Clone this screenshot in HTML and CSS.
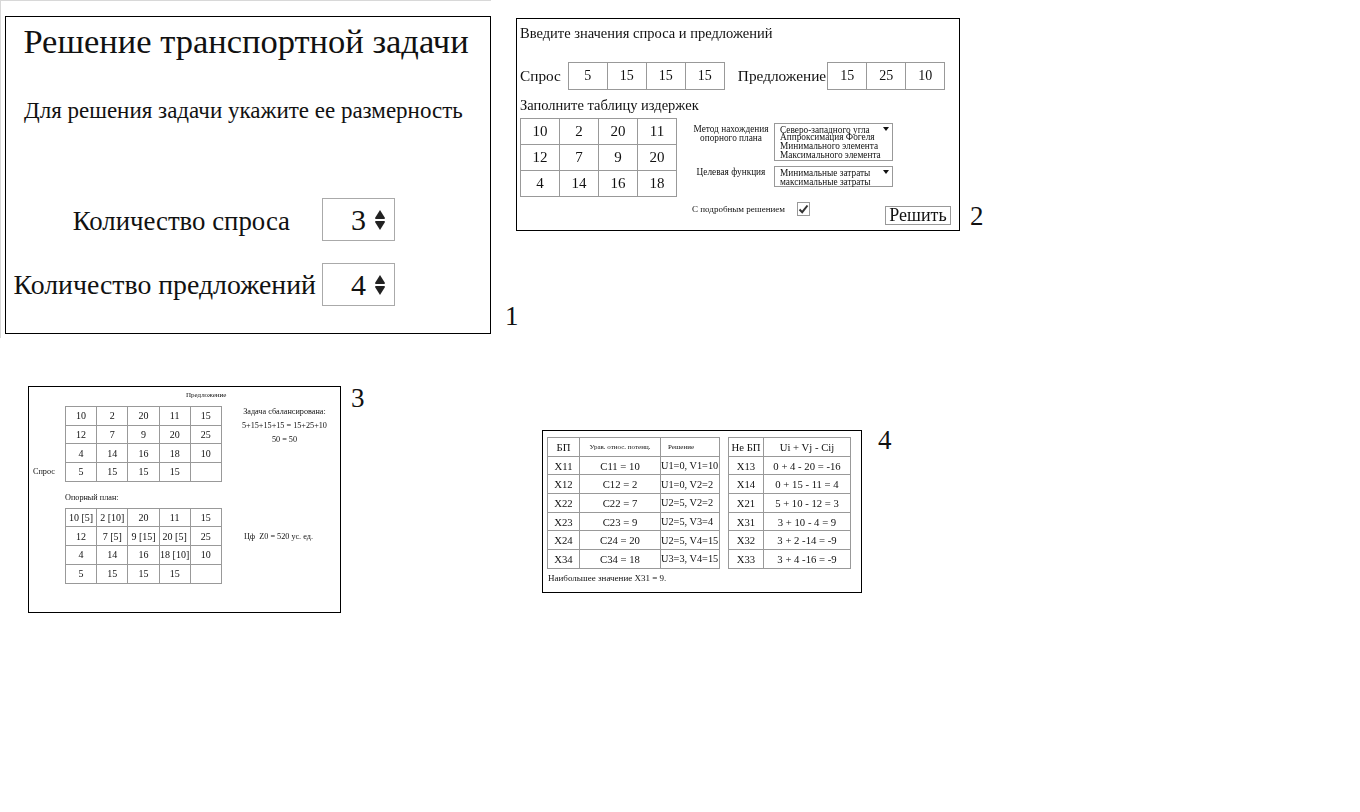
FILE: index.html
```html
<!DOCTYPE html>
<html lang="en">
<head>
    <meta charset="UTF-8">
    <meta name="viewport" content="width=device-width, initial-scale=1.0">
    <title>Решение транспортной задачи</title>
    <link rel="stylesheet" href="styles.css">
</head>
<body>
    <div class="edge-top"></div>
    <div class="edge-left"></div>

    <!-- 1 -->
    <div class="panel panel-one">
        <h1>Решение транспортной задачи</h1>
        <p class="lead">Для решения задачи укажите ее размерность</p>
        <div class="size-row size-row-first">
            <span class="size-label size-label-short">Количество спроса</span>
            <div class="spinner"><span>3</span>
                <svg class="arrows" width="10" height="20" viewBox="0 0 10 20"><path d="M5 0 L10 8 Q10 9 9 9 H1 Q0 9 0 8 Z M1 11 H9 Q10 11 10 12 L5 20 L0 12 Q0 11 1 11 Z" fill="#222"/></svg>
            </div>
        </div>
        <div class="size-row">
            <span class="size-label">Количество предложений</span>
            <div class="spinner"><span>4</span>
                <svg class="arrows" width="10" height="20" viewBox="0 0 10 20"><path d="M5 0 L10 8 Q10 9 9 9 H1 Q0 9 0 8 Z M1 11 H9 Q10 11 10 12 L5 20 L0 12 Q0 11 1 11 Z" fill="#222"/></svg>
            </div>
        </div>
    </div>
    <div class="num num-one">1</div>

    <!-- 2 -->
    <div class="panel panel-two soft">
        <div class="two-title">Введите значения спроса и предложений</div>
        <div class="demand-row">
            <span>Спрос</span>
            <div class="cells cells-four"><div>5</div><div>15</div><div>15</div><div>15</div></div>
            <span class="supply-label">Предложение</span>
            <div class="cells cells-three"><div>15</div><div>25</div><div>10</div></div>
        </div>
        <div class="two-sub">Заполните таблицу издержек</div>
        <div class="two-body">
            <div class="cells cells-four cost-grid">
                <div>10</div><div>2</div><div>20</div><div>11</div>
                <div>12</div><div>7</div><div>9</div><div>20</div>
                <div>4</div><div>14</div><div>16</div><div>18</div>
            </div>
            <div class="options">
                <div class="option-row">
                    <div class="option-label">Метод нахождения<br>опорного плана</div>
                    <div class="listbox listbox-tall">
                        <span class="drop"></span>
                        <div>Северо-западного угла</div>
                        <div class="squeezed">Аппроксимация Фогеля</div>
                        <div>Минимального элемента</div>
                        <div>Максимального элемента</div>
                    </div>
                </div>
                <div class="option-row option-row-goal">
                    <div class="option-label">Целевая функция</div>
                    <div class="listbox">
                        <span class="drop"></span>
                        <div>Минимальные затраты</div>
                        <div>максимальные затраты</div>
                    </div>
                </div>
                <div class="detail-row">
                    <span>С подробным решением</span>
                    <span class="check">
                        <svg width="11" height="10" viewBox="0 0 11 10"><path d="M1.5 5.5 L4.2 8.2 L9.5 1.5" fill="none" stroke="#333" stroke-width="2"/></svg>
                    </span>
                </div>
            </div>
        </div>
        <div class="solve">Решить</div>
    </div>
    <div class="num num-two">2</div>

    <!-- 3 -->
    <div class="panel panel-three soft">
        <div class="three-head">Предложение</div>
        <div class="three-block">
            <span class="demand-side">Спрос</span>
            <div class="cells cells-five small-grid">
                <div>10</div><div>2</div><div>20</div><div>11</div><div>15</div>
                <div>12</div><div>7</div><div>9</div><div>20</div><div>25</div>
                <div>4</div><div>14</div><div>16</div><div>18</div><div>10</div>
                <div>5</div><div>15</div><div>15</div><div>15</div><div></div>
            </div>
            <div class="three-note">
                <div>Задача сбалансирована:</div>
                <div>5+15+15+15 = 15+25+10</div>
                <div>50 = 50</div>
            </div>
        </div>
        <div class="plan-title">Опорный план:</div>
        <div class="three-block">
            <div class="cells cells-five small-grid">
                <div>10 [5]</div><div>2 [10]</div><div>20</div><div>11</div><div>15</div>
                <div>12</div><div>7 [5]</div><div>9 [15]</div><div>20 [5]</div><div>25</div>
                <div>4</div><div>14</div><div>16</div><div>18 [10]</div><div>10</div>
                <div>5</div><div>15</div><div>15</div><div>15</div><div></div>
            </div>
            <div class="three-total">Цф&nbsp; Z0 = 520 ус. ед.</div>
        </div>
    </div>
    <div class="num num-three">3</div>

    <!-- 4 -->
    <div class="panel panel-four soft">
        <div class="four-tables">
            <div class="cells four-left">
                <div>БП</div><div class="tiny">Урав. относ. потенц.</div><div class="tiny tiny-shifted">Решение</div>
                <div>X11</div><div>C11 = 10</div><div class="left">U1=0, V1=10</div>
                <div>X12</div><div>C12 = 2</div><div class="left">U1=0, V2=2</div>
                <div>X22</div><div>C22 = 7</div><div class="left">U2=5, V2=2</div>
                <div>X23</div><div>C23 = 9</div><div class="left">U2=5, V3=4</div>
                <div>X24</div><div>C24 = 20</div><div class="left">U2=5, V4=15</div>
                <div>X34</div><div>C34 = 18</div><div class="left">U3=3, V4=15</div>
            </div>
            <div class="cells four-right">
                <div>Не БП</div><div>Ui + Vj - Cij</div>
                <div>X13</div><div>0 + 4 - 20 = -16</div>
                <div>X14</div><div>0 + 15 - 11 = 4</div>
                <div>X21</div><div>5 + 10 - 12 = 3</div>
                <div>X31</div><div>3 + 10 - 4 = 9</div>
                <div>X32</div><div>3 + 2 -14 = -9</div>
                <div>X33</div><div>3 + 4 -16 = -9</div>
            </div>
        </div>
        <div class="four-note">Наибольшее значение X31 = 9.</div>
    </div>
    <div class="num num-four">4</div>
</body>
</html>
```

FILE: styles.css
```css
html, body {
    margin: 0;
    padding: 0;
}
body {
    width: 1360px;
    height: 812px;
    position: relative;
    overflow: hidden;
    background-color: #fff;
    color: #111;
    font-family: 'Liberation Serif', 'Times New Roman', serif;
}
.edge-top {
    position: absolute;
    top: 0;
    left: 0;
    width: 491px;
    height: 1px;
    background-color: #d8d8d8;
}
.edge-left {
    position: absolute;
    top: 0;
    left: 0;
    width: 1px;
    height: 338px;
    background-color: #d8d8d8;
}
.panel {
    position: absolute;
    box-sizing: border-box;
    border: 1px solid #000;
    background: #fff;
}
.soft > * {
    filter: blur(0.55px);
}
.num {
    position: absolute;
    font-size: 27px;
    line-height: 30px;
}
.num-one { left: 505px; top: 301px; }
.num-two { left: 970px; top: 201px; }
.num-three { left: 351px; top: 383px; }
.num-four { left: 878px; top: 425px; }

/* shared cell grids */
.cells {
    display: grid;
    border-top: 1px solid #999;
    border-left: 1px solid #999;
}
.cells > div {
    display: flex;
    align-items: center;
    justify-content: center;
    border-right: 1px solid #999;
    border-bottom: 1px solid #999;
    box-sizing: border-box;
    white-space: nowrap;
}
.cells-three { grid-template-columns: repeat(3, 39px); }
.cells-four { grid-template-columns: repeat(4, 39px); }
.cells-five { grid-template-columns: repeat(5, 31.2px); }

/* panel 1 */
.panel-one {
    left: 5px;
    top: 16px;
    width: 486px;
    height: 318px;
}
.panel-one h1 {
    margin: 2px 0 0;
    padding-right: 4px;
    font-size: 34.5px;
    font-weight: normal;
    line-height: 44px;
    text-align: center;
}
.lead {
    margin: 33px 0 0 18px;
    font-size: 23px;
    line-height: 30px;
}
.size-row {
    display: flex;
    align-items: center;
    justify-content: flex-end;
    width: 389px;
    margin-top: 22px;
}
.size-row-first {
    margin-top: 72px;
}
.size-label {
    font-size: 27.8px;
    white-space: nowrap;
    margin-right: 6px;
}
.size-label-short {
    font-size: 26.8px;
    margin-top: 4px;
    margin-right: 32px;
}
.spinner {
    display: flex;
    align-items: center;
    justify-content: flex-end;
    gap: 9px;
    box-sizing: border-box;
    width: 73px;
    height: 43px;
    padding-right: 9px;
    border: 1px solid #aaa;
    font-size: 30px;
}

/* panel 2 */
.panel-two {
    left: 516px;
    top: 18px;
    width: 444px;
    height: 213px;
}
.two-title {
    margin: 6px 0 0 3px;
    font-size: 14.5px;
    line-height: 16px;
}
.demand-row {
    display: flex;
    align-items: center;
    margin: 21px 0 0 3px;
    font-size: 15.3px;
}
.demand-row .cells {
    margin-left: 7px;
    height: 27px;
    font-size: 14px;
}
.demand-row .supply-label {
    margin-left: 13px;
    margin-right: -6px;
}
.two-sub {
    margin: 7px 0 0 3px;
    font-size: 14.5px;
    line-height: 17px;
}
.two-body {
    display: flex;
    align-items: flex-start;
    margin: 4px 0 0 3px;
}
.cost-grid {
    grid-auto-rows: 26px;
    font-size: 15px;
}
.options {
    margin: 5px 0 0 15px;
    font-size: 9.3px;
    line-height: 9px;
}
.option-row {
    display: flex;
    gap: 4px;
}
.option-row-goal {
    margin-top: 5px;
}
.option-label {
    width: 78px;
    padding-top: 2px;
    text-align: center;
    white-space: nowrap;
}
.listbox {
    position: relative;
    box-sizing: border-box;
    width: 119px;
    height: 21px;
    padding: 2px 5px;
    border: 1px solid #999;
    line-height: 9px;
}
.listbox-tall {
    height: 38px;
}
.squeezed {
    margin-top: -2px;
}
.drop {
    position: absolute;
    top: 3px;
    right: 3px;
    border-left: 3px solid transparent;
    border-right: 3px solid transparent;
    border-top: 4px solid #111;
}
.detail-row {
    display: flex;
    align-items: center;
    gap: 12px;
    margin-top: 15px;
    font-size: 9px;
}
.check {
    display: flex;
    align-items: center;
    justify-content: center;
    box-sizing: border-box;
    width: 13px;
    height: 14px;
    border: 1px solid #999;
}
.solve {
    position: absolute;
    left: 368px;
    top: 187px;
    box-sizing: border-box;
    width: 66px;
    height: 19px;
    border: 1px solid #999;
    font-size: 18px;
    line-height: 17px;
    text-align: center;
}

/* panel 3 */
.panel-three {
    left: 28px;
    top: 386px;
    width: 313px;
    height: 227px;
    font-size: 8.2px;
}
.three-head {
    margin: 4px 0 0 157px;
    font-size: 7px;
    line-height: 9px;
}
.three-block {
    position: relative;
    display: flex;
    margin: 6px 0 0 36px;
}
.small-grid {
    grid-auto-rows: 18.7px;
    font-size: 10px;
}
.demand-side {
    position: absolute;
    left: -32px;
    top: 61px;
}
.three-note {
    margin: -1px 0 0 20px;
    text-align: center;
    line-height: 14px;
}
.plan-title {
    margin: 11px 0 -1px 36px;
    line-height: 10px;
}
.three-total {
    margin: 24px 0 0 22px;
}

/* panel 4 */
.panel-four {
    left: 542px;
    top: 430px;
    width: 320px;
    height: 163px;
    font-size: 10.7px;
}
.four-tables {
    display: flex;
    gap: 8px;
    margin: 6px 0 0 4px;
}
.four-left {
    grid-template-columns: 32px 81px 59px;
    grid-auto-rows: 18.7px;
}
.four-right {
    grid-template-columns: 35px 87px;
    grid-auto-rows: 18.7px;
}
.four-left .left {
    justify-content: flex-start;
    font-size: 10.3px;
}
.four-left .tiny {
    font-size: 7px;
}
.four-left .tiny-shifted {
    padding-right: 18px;
}
.four-note {
    margin: 4px 0 0 5px;
    font-size: 9px;
}
```
